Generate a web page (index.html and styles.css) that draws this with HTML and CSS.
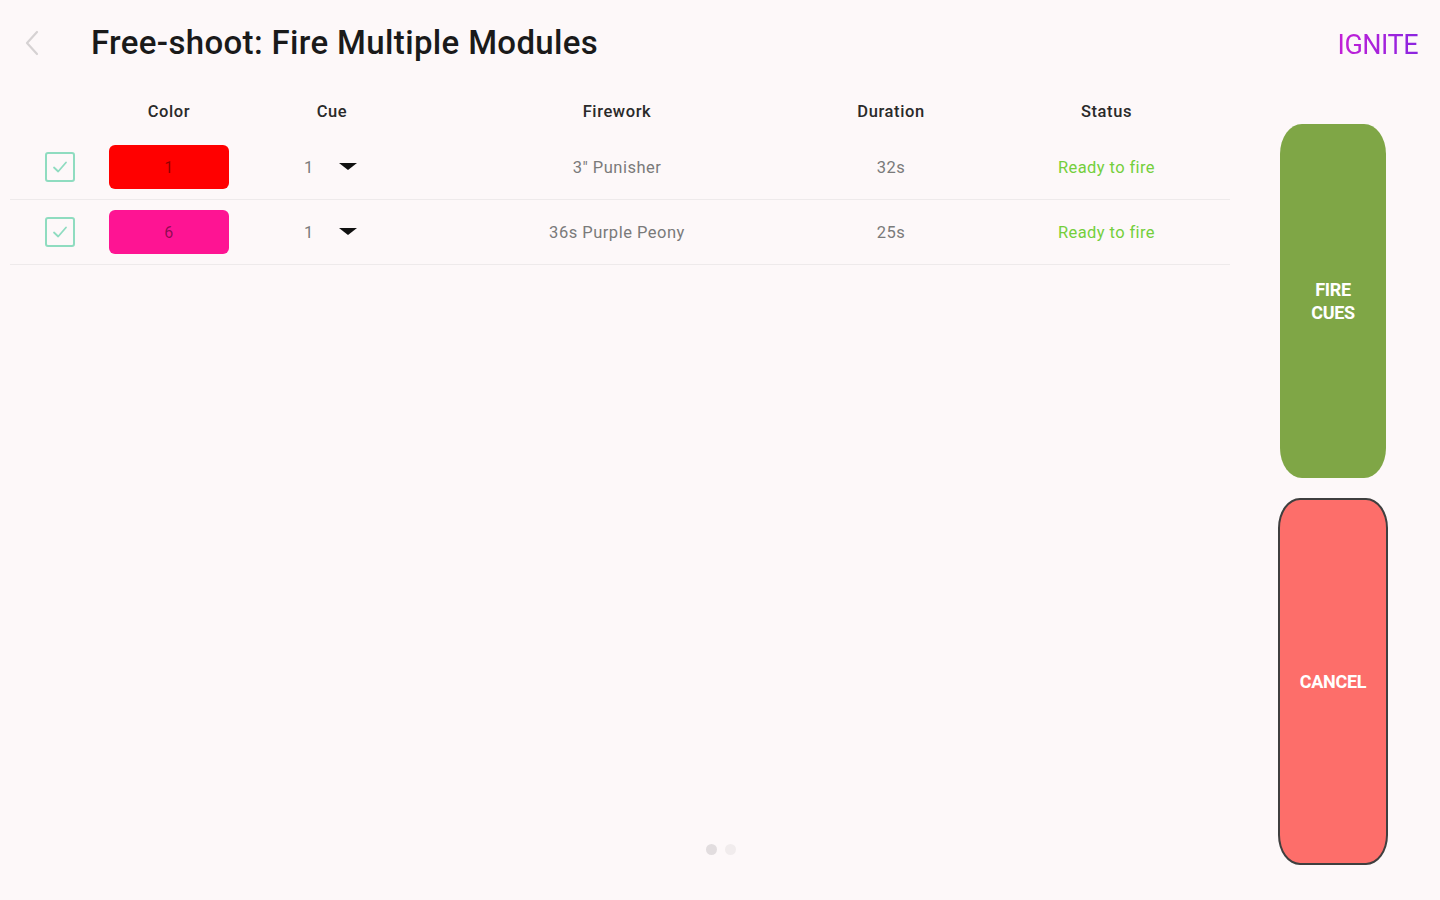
FILE: index.html
```html
<!DOCTYPE html>
<html lang="en">
<head>
<meta charset="utf-8">
<title>Free-shoot: Fire Multiple Modules</title>
<link rel="stylesheet" href="styles.css">
</head>
<body>
<div class="app">
  <header class="topbar">
    <button class="back" aria-label="Back">
      <svg width="16" height="26" viewBox="0 0 16 26"><path d="M13 2 L3 13 L13 24" fill="none" stroke="#d6d2d3" stroke-width="2.2" stroke-linecap="round" stroke-linejoin="round"/></svg>
    </button>
    <h1 class="title">Free-shoot: Fire Multiple Modules</h1>
    <div class="brand">IGNITE</div>
  </header>
  <main class="main">
    <section class="table">
      <div class="row head">
        <div class="cell"></div>
        <div class="cell">Color</div>
        <div class="cell">Cue</div>
        <div class="cell">Firework</div>
        <div class="cell">Duration</div>
        <div class="cell">Status</div>
      </div>
      <div class="row body">
        <div class="cell"><span class="check"><svg width="20" height="20" viewBox="0 0 20 20"><path d="M4 10.5 L8.2 14.5 L16 5.5" fill="none" stroke="#8fdcc0" stroke-width="1.8" stroke-linecap="round" stroke-linejoin="round"/></svg></span></div>
        <div class="cell"><span class="swatch red">1</span></div>
        <div class="cell"><span class="cue">1</span><span class="caret"></span></div>
        <div class="cell">3" Punisher</div>
        <div class="cell">32s</div>
        <div class="cell status">Ready to fire</div>
      </div>
      <div class="row body">
        <div class="cell"><span class="check"><svg width="20" height="20" viewBox="0 0 20 20"><path d="M4 10.5 L8.2 14.5 L16 5.5" fill="none" stroke="#8fdcc0" stroke-width="1.8" stroke-linecap="round" stroke-linejoin="round"/></svg></span></div>
        <div class="cell"><span class="swatch pink">6</span></div>
        <div class="cell"><span class="cue">1</span><span class="caret"></span></div>
        <div class="cell">36s Purple Peony</div>
        <div class="cell">25s</div>
        <div class="cell status">Ready to fire</div>
      </div>
    </section>
    <aside class="actions">
      <button class="btn fire">FIRE<br>CUES</button>
      <button class="btn cancel">CANCEL</button>
    </aside>
  </main>
  <div class="pager"><span class="dot on"></span><span class="dot"></span></div>
</div>
</body>
</html>
```

FILE: styles.css
```css
* { box-sizing: border-box; }
html, body { margin: 0; padding: 0; }
body {
  background: #fdf8f9;
  font-family: Roboto, "Noto Sans", sans-serif;
  color: #222;
  width: 1440px;
  height: 900px;
  overflow: hidden;
}
.app {
  position: relative;
  height: 900px;
  display: flex;
  flex-direction: column;
}
.topbar {
  height: 88px;
  display: flex;
  align-items: center;
  padding: 0 20px 4px 22px;
}
.back {
  background: none;
  border: 0;
  padding: 0;
  width: 20px;
  height: 28px;
  display: flex;
  align-items: center;
  justify-content: center;
  margin-top: 2px;
}
.title {
  margin: 0 0 0 49px;
  font-size: 33px;
  font-weight: 500;
  color: #1a1a1a;
  letter-spacing: 0.35px;
  flex: 1;
}
.brand {
  font-size: 27px;
  font-weight: 400;
  letter-spacing: -0.5px;
  background: linear-gradient(90deg, #c41fd6, #8b25e0);
  -webkit-background-clip: text;
  background-clip: text;
  color: transparent;
  margin-top: 6px;
  margin-right: 2px;
}
.main {
  flex: 1;
  display: flex;
  align-items: flex-start;
  padding-left: 10px;
}
.table {
  width: 1220px;
}
.row {
  display: grid;
  grid-template-columns: 99px 120px 206px 364px 184px 247px;
  align-items: center;
}
.row.head {
  height: 47px;
  font-size: 16.5px;
  font-weight: 500;
  color: #2a2a2a;
  letter-spacing: 0.6px;
}
.row.body {
  height: 65px;
  border-bottom: 1px solid #eeeaeb;
  font-size: 16.5px;
  color: #7a7a7a;
  letter-spacing: 0.5px;
}
.cell {
  display: flex;
  justify-content: center;
  align-items: center;
}
.check {
  width: 30px;
  height: 30px;
  border: 2px solid #8fdcc0;
  border-radius: 3px;
  display: flex;
  align-items: center;
  justify-content: center;
}
.swatch {
  width: 120px;
  height: 44px;
  border-radius: 6px;
  display: flex;
  align-items: center;
  justify-content: center;
  font-size: 16px;
  color: rgba(0,0,0,0.45);
}
.swatch.red { background: #ff0000; }
.swatch.pink { background: #fe1493; }
.cue { margin-right: 25px; margin-left: -3px; }
.caret {
  width: 0;
  height: 0;
  border-left: 9px solid transparent;
  border-right: 9px solid transparent;
  border-top: 7px solid #111;
  margin-top: -1px;
}
.status { color: #74cf3c; letter-spacing: 0.4px; }
.actions {
  margin-left: 48px;
  margin-top: 36px;
  width: 110px;
  display: flex;
  flex-direction: column;
  align-items: center;
  gap: 20px;
}
.btn {
  border: 0;
  font-family: Roboto, "Noto Sans", sans-serif;
  font-weight: 700;
  font-size: 18px;
  line-height: 23px;
  color: #fff;
  letter-spacing: -0.3px;
  display: flex;
  align-items: center;
  justify-content: center;
}
.fire {
  width: 106px;
  height: 354px;
  background: #7fa646;
  border-radius: 22px / 30px;
}
.cancel {
  width: 110px;
  height: 367px;
  background: #fd6e6a;
  border: 2px solid #3f3f3f;
  border-radius: 22px / 30px;
}
.pager {
  position: absolute;
  left: 706px;
  top: 844px;
  display: flex;
  gap: 8px;
}
.dot {
  width: 11px;
  height: 11px;
  border-radius: 50%;
  background: #f1eced;
}
.dot.on { background: #e2dddf; }
```
